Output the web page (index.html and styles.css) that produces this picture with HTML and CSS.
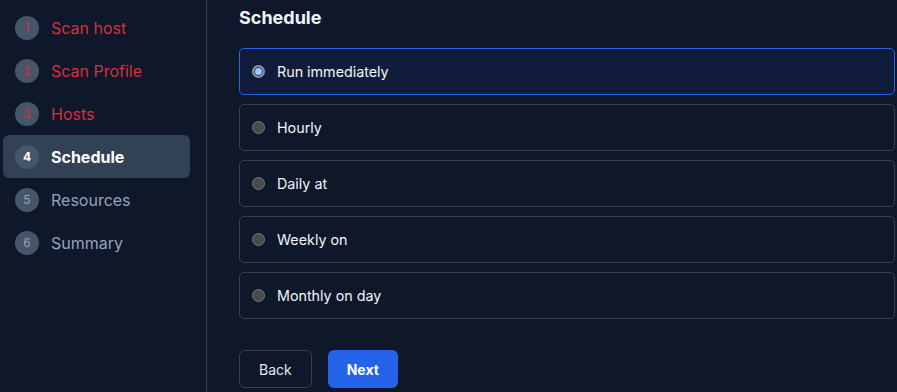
FILE: index.html
```html
<!DOCTYPE html>
<html lang="en">
<head>
  <meta charset="UTF-8" />
  <meta name="viewport" content="width=device-width, initial-scale=1.0"/>
  <title>New Scan - Schedule</title>
  <link rel="stylesheet" href="styles.css">
</head>
<body>
  <aside class="sidebar">
    <ul class="steps">
      <li class="step done"><span class="num">1</span>Scan host</li>
      <li class="step done"><span class="num">2</span>Scan Profile</li>
      <li class="step done"><span class="num">3</span>Hosts</li>
      <li class="step active"><span class="num">4</span>Schedule</li>
      <li class="step"><span class="num">5</span>Resources</li>
      <li class="step"><span class="num">6</span>Summary</li>
    </ul>
  </aside>

  <main class="content">
    <h2>Schedule</h2>
    <form class="options">
      <label class="option checked"><span class="radio"></span>Run immediately</label>
      <label class="option"><span class="radio"></span>Hourly</label>
      <label class="option"><span class="radio"></span>Daily at</label>
      <label class="option"><span class="radio"></span>Weekly on</label>
      <label class="option"><span class="radio"></span>Monthly on day</label>
    </form>
    <div class="actions">
      <button class="btn btn-back" type="button">Back</button>
      <button class="btn btn-next" type="button">Next</button>
    </div>
  </main>
</body>
</html>
```

FILE: styles.css
```css
body {
  margin: 0;
  height: 392px;
  overflow: hidden;
  display: flex;
  background-color: #0f172a;
  font-family: Inter, "Noto Sans", sans-serif;
  color: #f1f5f9;
}

.sidebar {
  width: 207px;
  flex-shrink: 0;
  border-right: 1px solid #334155;
  padding: 6px 0 0 3px;
  box-sizing: border-box;
}

.steps {
  list-style: none;
  margin: 0;
  padding: 0;
  width: 187px;
}

.step {
  display: flex;
  align-items: center;
  gap: 12px;
  height: 43px;
  padding-left: 12px;
  font-size: 16px;
  color: #94a3b8;
  border-radius: 6px;
}

.step .num {
  width: 24px;
  height: 24px;
  border-radius: 50%;
  background-color: #475569;
  display: flex;
  align-items: center;
  justify-content: center;
  font-size: 12px;
}

.step.done {
  color: #d6313d;
}

.step.active {
  background-color: #334155;
  color: #ffffff;
  font-weight: bold;
}

.content {
  flex: 1;
  padding: 6px 2px 0 32px;
}

.content h2 {
  margin: 0 0 18px;
  font-size: 18px;
  line-height: 24px;
  font-weight: bold;
}

.options {
  display: flex;
  flex-direction: column;
  gap: 9px;
}

.option {
  display: flex;
  align-items: center;
  gap: 12px;
  height: 47px;
  box-sizing: border-box;
  padding-left: 12px;
  border: 1px solid #334155;
  border-radius: 5px;
  font-size: 14.3px;
}

.option.checked {
  border-color: #2563eb;
  background-color: #111c3a;
}

.radio {
  width: 13px;
  height: 13px;
  box-sizing: border-box;
  border-radius: 50%;
  border: 1px solid #7a7a7a;
  background-color: #4a4a4a;
  margin-top: -1px;
}

.option.checked .radio {
  border: 2px solid #8496ae;
  background-color: #a3c8fb;
  box-shadow: inset 0 0 0 1px #1c2b44;
}

.actions {
  display: flex;
  gap: 16px;
  margin-top: 31px;
}

.btn {
  height: 38px;
  padding: 0 19px;
  border-radius: 6px;
  font-family: inherit;
  font-size: 14px;
  cursor: pointer;
}

.btn-back {
  background-color: transparent;
  border: 1px solid #334155;
  color: #e2e8f0;
}

.btn-next {
  background-color: #2563eb;
  border: none;
  color: #ffffff;
  font-weight: bold;
}
```
